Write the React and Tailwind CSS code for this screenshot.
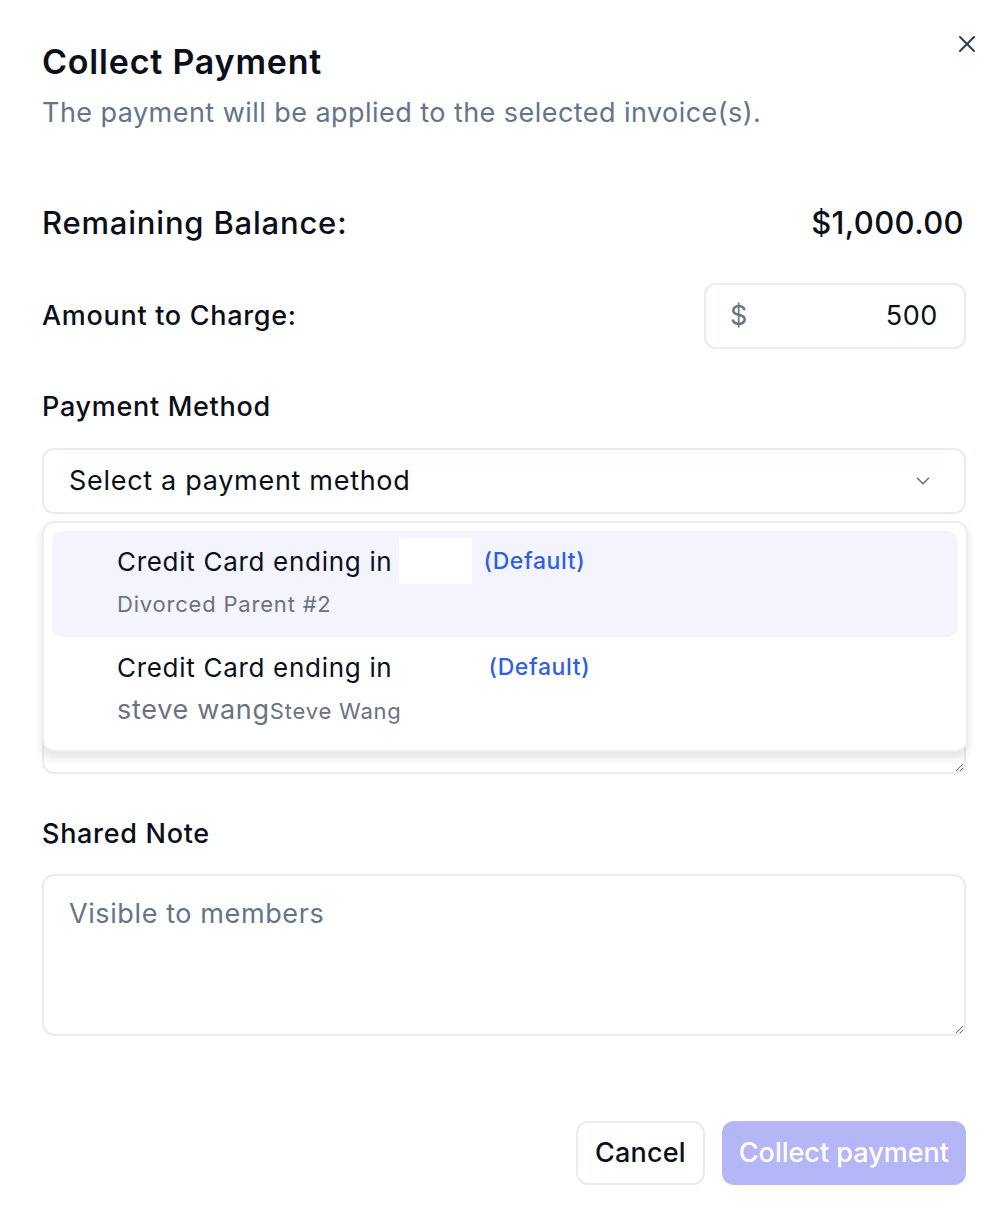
import React from "react";
import { X, ChevronDown } from "lucide-react";

export default function App() {
  return (
    <div
      className="relative w-[994px] h-[1230px] bg-white text-[#0b0f19] pl-[42px] pr-[28px] pt-[40px]"
      style={{ fontFamily: "Inter, 'Noto Sans', sans-serif" }}
    >
      <button className="absolute top-[30px] right-[13px] text-[#334155]">
        <X size={28} strokeWidth={1.8} />
      </button>

      <h1 className="text-[34px] leading-[44px] font-semibold tracking-[0.8px]">Collect Payment</h1>
      <p className="mt-[11px] text-[27px] leading-[36px] tracking-[0.45px] text-[#64748b]">
        The payment will be applied to the selected invoice(s).
      </p>

      <div className="mt-[72px] flex items-center justify-between h-[40px]">
        <span className="text-[31px] font-medium tracking-[0.8px]">Remaining Balance:</span>
        <span className="text-[31px] font-medium tracking-[0.4px] pr-[2px]">$1,000.00</span>
      </div>

      <div className="mt-[40px] flex items-center justify-between">
        <span className="text-[27px] font-medium tracking-[0.7px]">Amount to Charge:</span>
        <div className="w-[262px] h-[66px] border-2 border-[#e8ebf2] rounded-[12px] flex items-center justify-between pl-[24px] pr-[26px]">
          <span className="text-[27px] text-[#6b7280]">$</span>
          <span className="text-[27px] tracking-[0.6px]">500</span>
        </div>
      </div>

      <div className="relative">
        <div className="mt-[40px] text-[27px] leading-[36px] font-medium tracking-[0.7px]">Payment Method</div>
        <div className="mt-[23px] h-[66px] border-2 border-[#e8ebf2] rounded-[12px] flex items-center justify-between pl-[25px] pr-[30px]">
          <span className="text-[27px] tracking-[0.7px]">Select a payment method</span>
          <ChevronDown size={22} strokeWidth={1.8} className="text-[#6b7280]" />
        </div>

        <div className="mt-[40px] h-[36px]" />
        <textarea className="mt-[22px] block w-full h-[162px] border-2 border-[#e8ebf2] rounded-[12px] px-[25px] py-[18px] text-[27px]" />

        <div className="absolute left-0 right-[-2px] top-[132px] h-[231px] bg-white border-2 border-[#eceef4] rounded-[12px] shadow-[0_6px_10px_rgba(15,23,42,0.12)] p-[8px]">
          <div className="h-[106px] rounded-[10px] bg-[#f3f4fe] pl-[65px] pt-[10px]">
            <div className="flex items-center h-[40px]">
              <span className="text-[26px] tracking-[0.7px]">Credit Card ending in</span>
              <span className="ml-[7px] w-[73px] h-[46px] bg-white" />
              <span className="ml-[11px] text-[23px] font-medium tracking-[0.6px] text-[#2f5fe3]">(Default)</span>
            </div>
            <div className="mt-[7px] text-[22px] tracking-[0.8px] text-[#6b7280]">Divorced Parent #2</div>
          </div>
          <div className="h-[106px] pl-[65px] pt-[10px]">
            <div className="flex items-center h-[40px]">
              <span className="text-[26px] tracking-[0.7px]">Credit Card ending in</span>
              <span className="ml-[7px] w-[78px] h-[46px] bg-white" />
              <span className="ml-[11px] text-[23px] font-medium tracking-[0.6px] text-[#2f5fe3]">(Default)</span>
            </div>
            <div className="mt-[3px] text-[#6b7280]">
              <span className="text-[27px] tracking-[0.7px]">steve wang</span>
              <span className="text-[22px] tracking-[0.8px]">Steve Wang</span>
            </div>
          </div>
        </div>
      </div>

      <div className="mt-[42px] text-[27px] leading-[36px] font-medium tracking-[0.7px]">Shared Note</div>
      <textarea
        className="mt-[22px] block w-full h-[162px] border-2 border-[#e8ebf2] rounded-[12px] px-[25px] py-[18px] text-[27px] tracking-[0.6px] placeholder-[#64748b] outline-none"
        placeholder="Visible to members"
      />

      <div className="mt-[85px] flex justify-end gap-[17px]">
        <button className="h-[64px] px-[17px] border-2 border-[#e8ebf2] rounded-[12px] text-[27px] font-medium tracking-[0.2px]">
          Cancel
        </button>
        <button className="h-[64px] px-[17px] rounded-[12px] bg-[#b4b6f7] text-white text-[27px] font-medium">
          Collect payment
        </button>
      </div>
    </div>
  );
}
